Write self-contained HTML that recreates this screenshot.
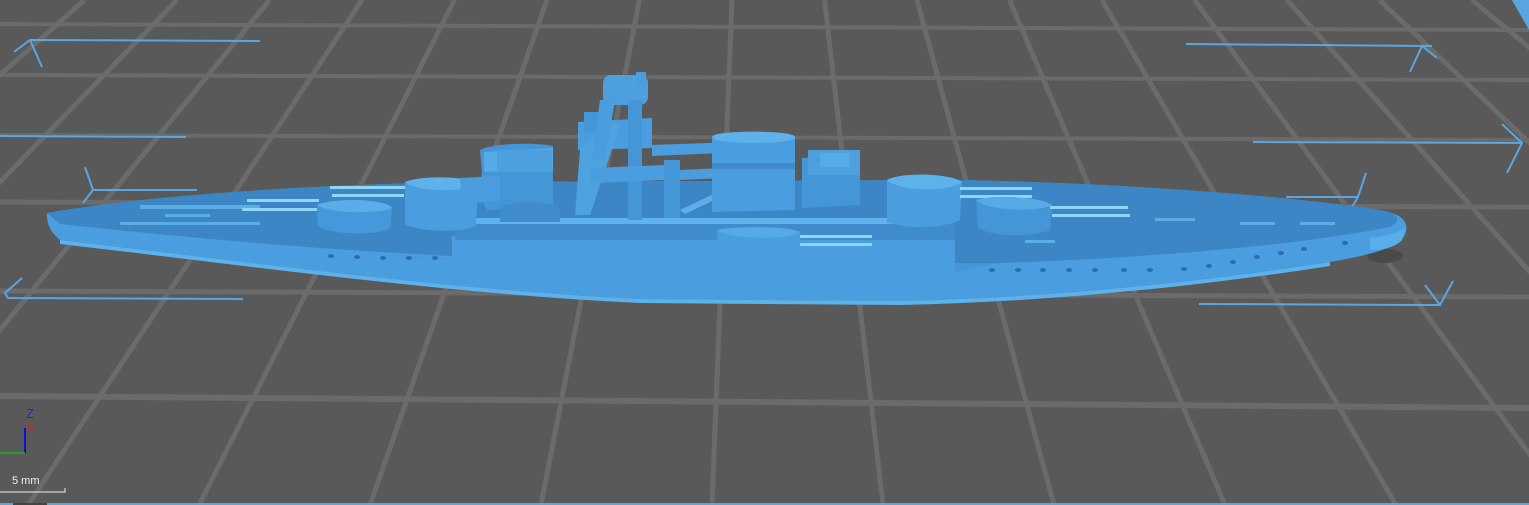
<!DOCTYPE html>
<html><head><meta charset="utf-8"><style>
html,body{margin:0;padding:0;background:#595959;}
body{width:1529px;height:505px;overflow:hidden;position:relative;font-family:"Liberation Sans",sans-serif;}
svg{position:absolute;left:0;top:0;}
</style></head><body>
<svg width="1529" height="505" viewBox="0 0 1529 505">
<rect width="1529" height="505" fill="#595959"/>
<g stroke="#6b6b6b" fill="none">
<line x1="0" y1="24" x2="1529" y2="30" stroke-width="4"/>
<line x1="0" y1="75" x2="1529" y2="80" stroke-width="4"/>
<line x1="0" y1="135" x2="1529" y2="140" stroke-width="4"/>
<line x1="0" y1="202" x2="1529" y2="207" stroke-width="5"/>
<line x1="0" y1="291" x2="1529" y2="297" stroke-width="5"/>
<line x1="0" y1="396" x2="1529" y2="408" stroke-width="6"/>
<line x1="-100" y1="503" x2="1629" y2="503" stroke-width="0"/>
</g>
<g stroke="#6b6b6b" stroke-width="5" fill="none" id="vl">
<line x1="-100.5" y1="0" x2="-827" y2="505"/>
<line x1="-8" y1="0" x2="-656" y2="505"/>
<line x1="84.5" y1="0" x2="-485" y2="505"/>
<line x1="177" y1="0" x2="-314" y2="505"/>
<line x1="269.5" y1="0" x2="-143" y2="505"/>
<line x1="362" y1="0" x2="28" y2="505"/>
<line x1="454.5" y1="0" x2="199" y2="505"/>
<line x1="547" y1="0" x2="370" y2="505"/>
<line x1="639.5" y1="0" x2="541" y2="505"/>
<line x1="732" y1="0" x2="712" y2="505"/>
<line x1="824.5" y1="0" x2="883" y2="505"/>
<line x1="917" y1="0" x2="1054" y2="505"/>
<line x1="1009.5" y1="0" x2="1225" y2="505"/>
<line x1="1102" y1="0" x2="1396" y2="505"/>
<line x1="1194.5" y1="0" x2="1567" y2="505"/>
<line x1="1287" y1="0" x2="1738" y2="505"/>
<line x1="1379.5" y1="0" x2="1909" y2="505"/>
<line x1="1472" y1="0" x2="2080" y2="505"/>
<line x1="1564.5" y1="0" x2="2251" y2="505"/>
</g>

<!-- bounding arrows -->
<g stroke="#5aa6e0" stroke-width="2" fill="none">
<polyline points="14,52 30,40 260,41"/><line x1="30" y1="40" x2="42" y2="67"/>
<line x1="0" y1="136" x2="186" y2="137"/>
<polyline points="85,167 93,190 197,190"/><line x1="93" y1="190" x2="83" y2="203"/>
<polyline points="22,278 5,293 8,298 243,299"/>
<line x1="1186" y1="44" x2="1432" y2="46"/><polyline points="1410,72 1422,46 1437,58"/>
<line x1="1253" y1="142" x2="1522" y2="143"/><polyline points="1502,124 1522,143 1507,173"/>
<polyline points="1286,197 1358,197 1366,173"/><line x1="1358" y1="197" x2="1352" y2="207"/>
<line x1="1199" y1="304" x2="1440" y2="305"/><polyline points="1425,285 1440,305 1453,281"/>
</g>
<polygon points="1512,0 1529,0 1529,30" fill="#5aa6e0"/>

<!-- hull -->
<ellipse cx="1385" cy="256" rx="18" ry="7" fill="#4a4a4a"/>
<path d="M47,213 C150,195 300,186 450,182 L960,180 C1150,184 1300,198 1380,210 C1402,214 1410,222 1405,235 C1398,248 1370,255 1330,262 C1200,282 1050,298 900,301 L640,299 C450,290 250,262 60,240 C50,232 46,222 47,213 Z" fill="#4a9ee0"/>
<path d="M47,213 C150,195 300,186 450,182 L960,180 C1150,184 1300,198 1380,210 C1400,214 1402,220 1390,227 C1300,245 1150,258 1000,263 L700,263 C500,262 300,250 60,224 Z" fill="#3c86c6"/>
<path d="M60,240 C250,262 450,290 640,299 L900,301 C1050,298 1200,282 1330,262 L1330,266 C1200,286 1050,302 900,305 L640,303 C450,294 250,266 60,244 Z" fill="#5db2ec"/>
<path d="M330,251 C500,265 700,272 955,272 L1000,263 L700,263 C500,262 420,258 330,251Z" fill="#4596d6"/>
<!-- hull portholes -->
<g fill="#2f6ea5">
<ellipse cx="331" cy="256" rx="3" ry="2"/><ellipse cx="357" cy="257" rx="3" ry="2"/><ellipse cx="383" cy="258" rx="3" ry="2"/><ellipse cx="409" cy="258" rx="3" ry="2"/><ellipse cx="435" cy="258" rx="3" ry="2"/>
<ellipse cx="992" cy="270" rx="3" ry="2"/><ellipse cx="1018" cy="270" rx="3" ry="2"/><ellipse cx="1043" cy="270" rx="3" ry="2"/><ellipse cx="1069" cy="270" rx="3" ry="2"/><ellipse cx="1095" cy="270" rx="3" ry="2"/><ellipse cx="1124" cy="270" rx="3" ry="2"/><ellipse cx="1150" cy="270" rx="3" ry="2"/><ellipse cx="1184" cy="269" rx="3" ry="2"/><ellipse cx="1209" cy="266" rx="3" ry="2"/><ellipse cx="1233" cy="262" rx="3" ry="2"/><ellipse cx="1257" cy="257" rx="3" ry="2"/><ellipse cx="1281" cy="253" rx="3" ry="2"/><ellipse cx="1304" cy="249" rx="3" ry="2"/><ellipse cx="1345" cy="243" rx="3" ry="2"/>
</g>
<path d="M1370,238 C1385,236 1400,232 1405,228 L1402,240 C1395,248 1380,250 1370,250Z" fill="#5aaeea"/>
<!-- deck details -->
<g fill="#5aaee6">
<rect x="140" y="205" width="120" height="4"/><rect x="165" y="214" width="45" height="3"/><rect x="120" y="222" width="140" height="3"/>
<rect x="1155" y="218" width="40" height="3"/><rect x="1240" y="222" width="35" height="3"/><rect x="1300" y="222" width="35" height="3"/>
<rect x="1025" y="240" width="30" height="3"/><rect x="660" y="250" width="40" height="4"/>
</g>

<!-- main superstructure -->
<path d="M452,236 L955,236 L955,275 L452,268 Z" fill="#4a9ee0"/>
<path d="M455,221 L955,221 L955,240 L455,240 Z" fill="#3f8bcb"/>
<path d="M458,218 L952,218 L952,224 L458,224Z" fill="#5fb2ec"/>

<!-- turret A -->
<path d="M317,205 C330,198 385,198 392,208 L390,228 C380,236 330,235 318,226 Z" fill="#4599da"/>
<path d="M317,205 C330,198 385,198 392,208 C380,214 330,214 317,205Z" fill="#5aaee8"/>
<rect x="247" y="199" width="72" height="3" fill="#8fd6f5"/><rect x="242" y="208" width="75" height="3" fill="#8fd6f5"/>
<!-- turret B -->
<path d="M405,182 C420,175 470,176 478,184 L476,226 C460,233 418,232 405,224Z" fill="#4a9ee0"/>
<path d="M405,182 C420,175 470,176 478,184 C468,192 418,193 405,182Z" fill="#5eb2ea"/>
<rect x="330" y="186" width="75" height="3" fill="#8fd6f5"/><rect x="332" y="194" width="72" height="3" fill="#8fd6f5"/>
<!-- bridge -->
<path d="M480,150 C495,142 540,143 553,146 L553,205 L487,210 C480,200 480,185 482,172Z" fill="#4596d6"/>
<path d="M484,152 L553,148 L553,170 L484,172Z" fill="#56aae6"/>
<rect x="497" y="150" width="55" height="22" fill="#4d9fdd"/>
<path d="M460,178 L500,176 L500,200 L462,205Z" fill="#4a9ee0"/>
<path d="M500,208 C510,200 555,200 560,210 L560,222 L500,222Z" fill="#3f8bcb"/>
<!-- tower -->
<rect x="603" y="75" width="45" height="30" rx="8" fill="#4d9fdd"/>
<rect x="636" y="72" width="10" height="14" fill="#4a9ee0"/>
<path d="M578,122 L652,118 L652,148 L578,150Z" fill="#4a9ee0"/>
<rect x="584" y="112" width="20" height="20" fill="#4596d6"/>
<rect x="628" y="100" width="14" height="120" fill="#4596d6"/>
<path d="M580,150 L610,120 L620,125 L590,215 L575,215Z" fill="#4ea2e0"/>
<path d="M590,168 L665,165 L665,180 L590,183Z" fill="#4a9ee0"/>
<path d="M600,100 L615,100 L605,160 L592,160Z" fill="#4a9ee0"/>
<!-- tripod crane -->
<path d="M652,145 L790,140 L790,150 L652,156Z" fill="#4a9ee0"/>
<rect x="664" y="160" width="16" height="58" fill="#4596d6"/>
<path d="M680,170 L790,165 L790,175 L680,180Z" fill="#4a9ee0"/>
<path d="M680,210 L760,172 L765,176 L685,214Z" fill="#5aaee6"/>
<!-- funnel -->
<path d="M712,137 C712,130 795,130 795,137 L795,210 L712,212Z" fill="#4a9ee0"/>
<path d="M712,137 C712,130 795,130 795,137 C795,145 712,145 712,137Z" fill="#5eb2ec"/>
<rect x="712" y="163" width="83" height="6" fill="#3f8bcb"/>
<!-- aft structure -->
<path d="M802,158 L860,155 L860,205 L802,208Z" fill="#4596d6"/>
<path d="M808,150 L860,150 L860,175 L808,175Z" fill="#4d9fdd"/>
<rect x="820" y="153" width="30" height="14" fill="#56aae6"/>
<!-- turret X -->
<path d="M887,180 C900,172 950,173 962,182 L960,220 C940,230 900,228 887,222Z" fill="#4a9ee0"/>
<path d="M887,180 C900,172 950,173 962,182 C950,192 900,192 887,180Z" fill="#5eb2ea"/>
<rect x="960" y="187" width="72" height="3" fill="#8fd6f5"/><rect x="960" y="195" width="72" height="3" fill="#8fd6f5"/>
<!-- turret Y -->
<path d="M976,200 C990,195 1040,196 1052,205 L1050,230 C1030,238 990,236 978,228Z" fill="#4596d6"/>
<path d="M976,200 C990,195 1040,196 1052,205 C1040,212 990,212 976,200Z" fill="#56aae6"/>
<rect x="1050" y="206" width="78" height="3" fill="#8fd6f5"/><rect x="1052" y="214" width="78" height="3" fill="#8fd6f5"/>
<!-- center turret -->
<path d="M717,230 C730,226 790,226 800,232 L802,262 C780,268 730,268 719,262Z" fill="#4a9ee0"/>
<path d="M717,230 C730,226 790,226 800,232 C790,240 730,240 717,230Z" fill="#56aae6"/>
<rect x="800" y="235" width="72" height="3" fill="#8fd6f5"/><rect x="800" y="243" width="72" height="3" fill="#8fd6f5"/>

<!-- axis gizmo -->
<line x1="25" y1="428" x2="25" y2="454" stroke="#1010d0" stroke-width="2"/>
<line x1="0" y1="453" x2="25" y2="453" stroke="#2a9a2a" stroke-width="2"/>
<text x="26" y="418" font-size="13" fill="#1a2ad8" font-family="Liberation Sans">Z</text>
<text x="27" y="431" font-size="11" fill="#e02020" font-family="Liberation Sans">X</text>
<text x="12" y="484" font-size="11" fill="#f0f0f0" font-family="Liberation Sans">5 mm</text>
<polyline points="0,492 65,492 65,488" stroke="#eee" stroke-width="1" fill="none"/>
<rect x="0" y="503" width="1529" height="2" fill="#5aa6e0"/>
<rect x="13" y="503" width="34" height="2" fill="#444"/>
</svg>
</body></html>
